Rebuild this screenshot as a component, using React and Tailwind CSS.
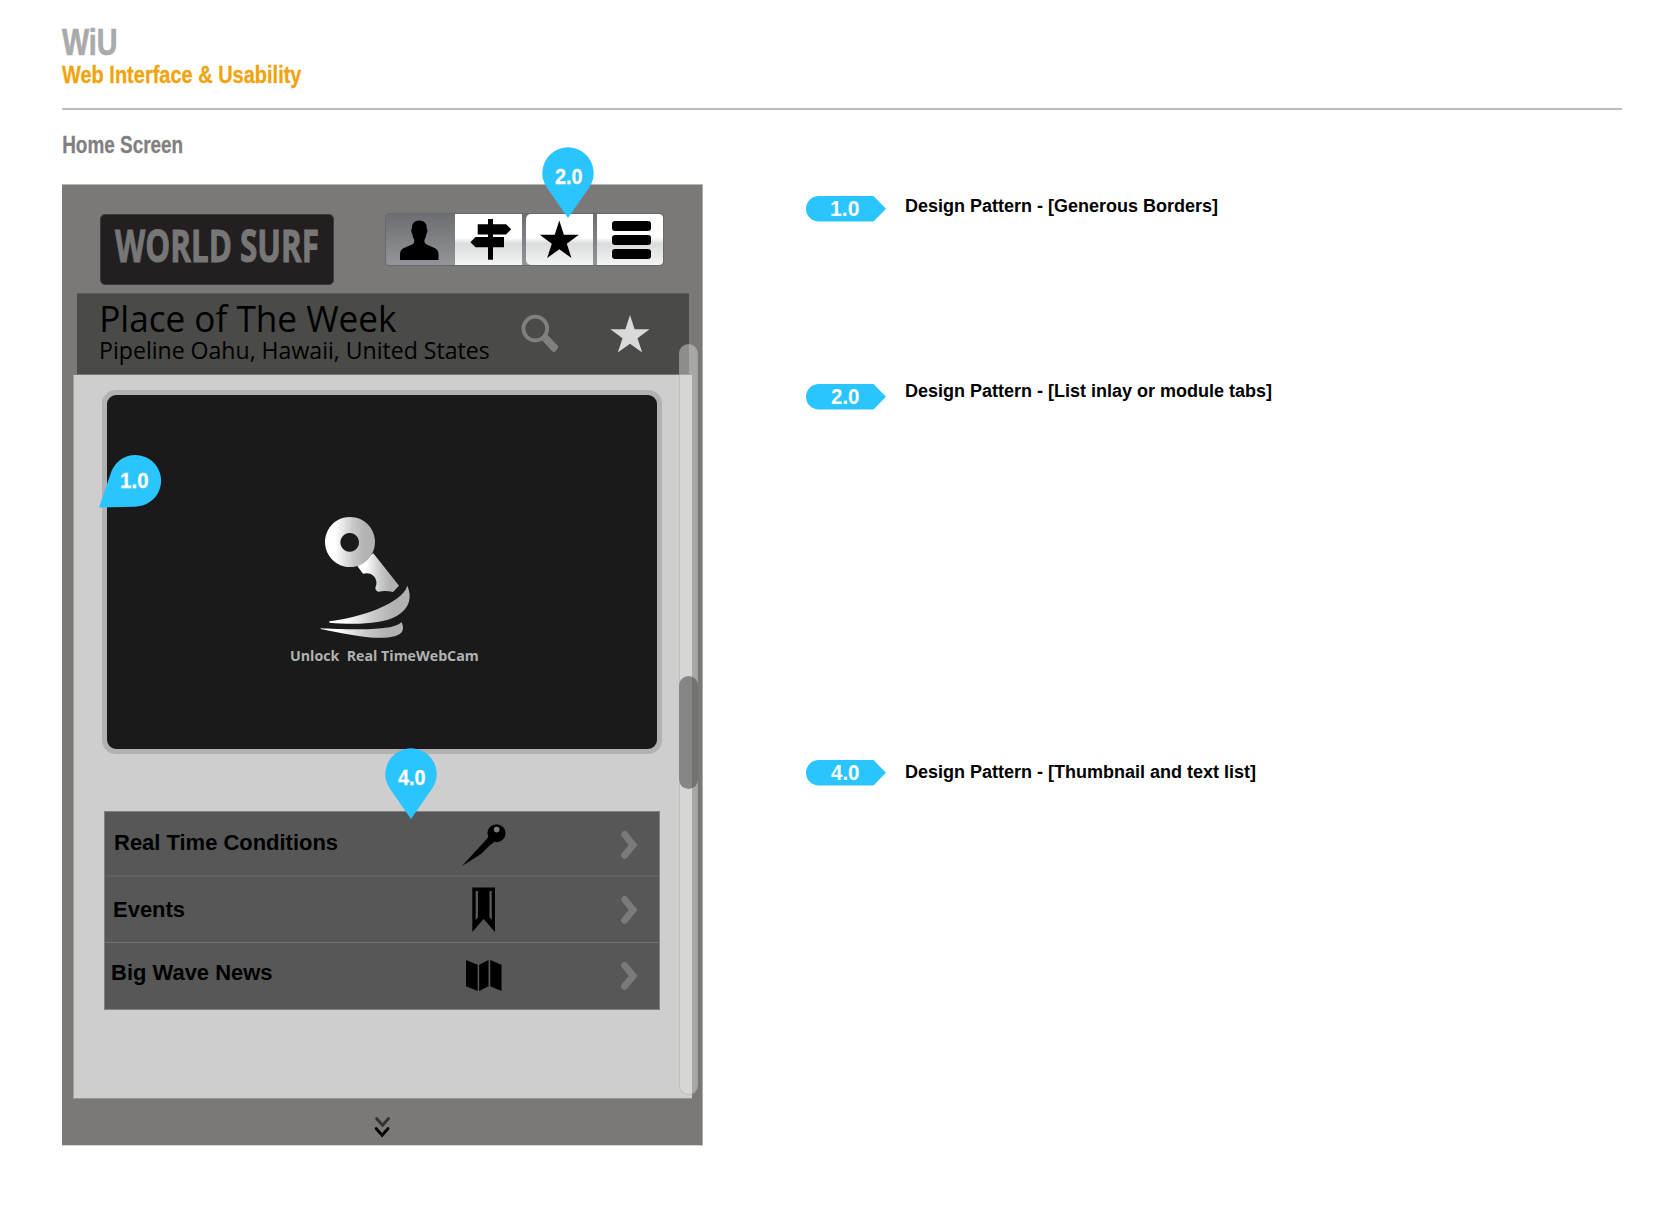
import { useLayoutEffect, useRef } from "react";

const SANS = "font-['Liberation_Sans',sans-serif]";
const HUMANIST = "font-['Open_Sans',sans-serif]";

// Condenses a line of text so that its ink spans exactly `width` pixels.
function Fit({ width, className = "", children }) {
  const ref = useRef(null);
  useLayoutEffect(() => {
    const el = ref.current;
    const cs = getComputedStyle(el);
    const ctx = document.createElement("canvas").getContext("2d");
    ctx.font = `${cs.fontWeight} ${cs.fontSize} ${cs.fontFamily}`;
    const m = ctx.measureText(children);
    const s = width / (m.actualBoundingBoxLeft + m.actualBoundingBoxRight);
    el.style.transform = `translateX(${m.actualBoundingBoxLeft * s}px) scaleX(${s})`;
  }, [width, children]);
  return (
    <div className={`${className} whitespace-pre`} style={{ width }}>
      <span ref={ref} className="block w-max origin-left">{children}</span>
    </div>
  );
}

const STAR = "M20 0 L24.6 14.3 L39.6 14.3 L27.5 23.2 L32.2 37.6 L20 28.8 L7.8 37.6 L12.5 23.2 L0.4 14.3 L15.4 14.3 Z";

function Pin({ label, className }) {
  return (
    <div className={`absolute h-[71px] w-[52px] ${className}`}>
      <svg className="absolute inset-0" width="52" height="71" viewBox="0 0 52 71">
        <path d="M26 71 L4.6 40.3 A25.7 25.7 0 1 1 47.4 40.3 Z" fill="#2ac4ff" />
      </svg>
      <Fit width={27} className={`${SANS} relative ml-[12.5px] pt-[15px] text-[22.6px] font-bold leading-[29px] text-white [-webkit-text-stroke:0.3px]`}>{label}</Fit>
    </div>
  );
}

function SidePin() {
  return (
    <div className="absolute left-[99px] top-[455px] h-[53px] w-[63px]">
      <svg className="absolute inset-0" width="63" height="53" viewBox="0 0 63 53">
        <path d="M0 52.6 L12.4 16.5 A25.7 25.7 0 1 1 41 51 Q38 51.7 35 51.7 Z" fill="#2ac4ff" />
      </svg>
      <Fit width={27} className={`${SANS} relative ml-[22px] pt-[12px] text-[22.6px] font-bold leading-7 text-white [-webkit-text-stroke:0.3px]`}>1.0</Fit>
    </div>
  );
}

function Tag({ label }) {
  return (
    <div className="relative h-[26px] w-20 shrink-0">
      <svg className="absolute inset-0" width="80" height="26" viewBox="0 0 80 26">
        <path d="M12.8 0 H67.5 L80 12.8 L67.5 25.6 H12.8 A12.8 12.8 0 0 1 12.8 0 Z" fill="#2ac4ff" />
      </svg>
      <Fit width={28.5} className={`${SANS} relative ml-[24.5px] text-[21.5px] font-bold leading-[26px] text-white`}>{label}</Fit>
    </div>
  );
}

function Note({ tag, text, width, className, lift }) {
  return (
    <div className={`flex items-start gap-[20px] ${className}`}>
      <Tag label={tag} />
      <Fit width={width} className={`${SANS} text-[18px] font-bold leading-5 text-black ${lift}`}>{text}</Fit>
    </div>
  );
}

function Chevron() {
  return (
    <svg className="absolute left-[512px] top-[18px]" width="22" height="30" viewBox="0 0 22 30">
      <path d="M7.6 4.3 L16.2 15 L7.6 25.3" fill="none" stroke="#7a7a7a" strokeWidth="6.8" strokeLinecap="round" strokeLinejoin="miter" />
    </svg>
  );
}

function ListRow({ label, width, className, textClass, icon }) {
  return (
    <div className={`relative ${className}`}>
      <Fit width={width} className={`${SANS} text-[22.6px] font-bold leading-7 text-black ${textClass}`}>{label}</Fit>
      {icon}
      <Chevron />
    </div>
  );
}

const lightTile = "bg-[linear-gradient(180deg,#fff_0%,#fff_46%,#dbdcdd_58%,#dfe0e0_66%,#f3f4f4_100%)]";

function NavBar() {
  return (
    <div className="mt-[28px] flex h-[53px] w-[279px] overflow-hidden rounded-[4px] border border-[#69696b] bg-gradient-to-b from-[#6d6e71] to-[#939598]">
      <div className="w-[69px]">
        <svg width="69" height="51" viewBox="0 0 69 51">
          <path d="M14 46 V40 Q14 35.5 18.5 33.7 L26.5 30.2 Q28.6 29 28.3 26 Q26.7 23.5 26.2 19.5 Q24.9 18.5 25.5 15 L26 14.5 Q25.6 6.8 33.3 6.6 Q41 6.8 40.7 14.5 L41.2 15 Q41.8 18.5 40.5 19.5 Q40 23.5 38.4 26 Q38.1 29 40.2 30.2 L48 33.7 Q52.5 35.5 52.5 40 V46 Z" />
        </svg>
      </div>
      <div className={`w-[67px] ${lightTile}`}>
        <svg width="67" height="51" viewBox="0 0 67 51">
          <path d="M33 5 H38 V45.7 H33 Z" />
          <path d="M22.7 10.2 H51 L56.2 15.3 L51 20.5 H22.7 Z" />
          <path d="M49 23 H20.5 L15.5 28.2 L20.5 33.3 H49 Z" />
        </svg>
      </div>
      <div className={`ml-[4px] w-[67px] rounded-l-[5px] ${lightTile}`}>
        <svg width="67" height="51" viewBox="0 0 67 51">
          <path d={STAR} transform="translate(13.3 6.5)" />
        </svg>
      </div>
      <div className={`ml-[4px] flex w-[66px] flex-col gap-[4px] rounded-r-[4px] pl-[15px] pt-[7px] ${lightTile}`}>
        <div className="h-[10px] w-[39px] rounded-[3px] bg-black" />
        <div className="h-[10px] w-[39px] rounded-[3px] bg-black" />
        <div className="h-[10px] w-[39px] rounded-[3px] bg-black" />
      </div>
    </div>
  );
}

function WebCam() {
  return (
    <div className="ml-[28px] mt-[15px] h-[364px] w-[560px] rounded-[14px] border-[5px] border-[#b2b2b2] bg-[#1a1a1a]">
      <svg className="ml-[173px] mt-[105px]" width="220" height="142" viewBox="0 0 660 426">
        <defs>
          <linearGradient id="metal" x1="0" y1="0" x2="1" y2="0">
            <stop offset="0.2" stopColor="#fff" />
            <stop offset="0.55" stopColor="#c8c9ca" />
            <stop offset="0.8" stopColor="#b2b2b2" />
          </linearGradient>
        </defs>
        <path d="M232 198 L280 160 L357 257 L339 276 Q315 270 296 275 Q286 272 286 263 Q294 244 283 230 Q270 216 249 221 Z" fill="url(#metal)" />
        <path fillRule="evenodd" d="M210 51 A75 75 0 1 1 209.9 51 Z M209 99 A28 28 0 1 0 209.1 99 Z" fill="url(#metal)" />
        <path d="M148 364 C240 352 365 312 382 257 C397 292 389 325 350 348 C305 374 220 374 148 368 Z" fill="url(#metal)" />
        <path d="M122 385 C190 388 345 395 364 366 C373 383 372 400 347 408 C290 424 200 402 122 387 Z" fill="url(#metal)" />
      </svg>
      <Fit width={187} className={`${HUMANIST} ml-[183.5px] mt-[3px] text-[15px] font-bold leading-5 text-[#b2b2b2]`}>Unlock  Real TimeWebCam</Fit>
    </div>
  );
}

const pinIcon = (
  <svg className="absolute left-[356px] top-[12px]" width="46" height="44" viewBox="0 0 46 44">
    <path d="M1 42 L23 18 Q26 15.5 27.5 12.5 L33 18.5 Q29.5 20 27 23 L20 30 Z" />
    <circle cx="35.5" cy="9.2" r="9" />
    <circle cx="35.7" cy="5.6" r="2.8" fill="#7a7a7a" />
  </svg>
);

const bookmarkIcon = (
  <svg className="absolute left-[367px] top-[10px]" width="24" height="46" viewBox="0 0 24 46">
    <path d="M.3 .5 H23 V45 L11.6 32 L.3 45 Z" />
    <path d="M3.6 4 H6 V30.5 L3.6 33 Z M17.4 4 H19.8 V33 L17.4 30.5 Z" fill="#575757" />
  </svg>
);

const mapIcon = (
  <svg className="absolute left-[361px] top-[17px]" width="36" height="32" viewBox="0 0 36 32">
    <path d="M0 0 L11.6 4.8 V31 L0 26.2 Z M13.2 4.8 L22.5 0 V26.2 L13.2 31 Z M24.3 0 L35.5 4.8 V31 L24.3 26.2 Z" />
  </svg>
);

function Phone() {
  return (
    <div className="flex h-[962px] w-[641px] flex-col border-b border-r border-t border-b-[#d6d6d5] border-r-[#adacab] border-t-[#b5b9b8] bg-[#7b7977]">
      <div className="flex h-[108px] items-start">
        <div className="ml-[38px] mt-[29px] h-[71px] w-[234px] rounded-[5px] border border-[#3d3a3a] bg-[#231f20]">
          <Fit width={203} className={`${HUMANIST} ml-[14px] mt-[2px] text-[44.5px] font-bold leading-[56px] text-[#777] [-webkit-text-stroke:1px]`}>WORLD SURF</Fit>
        </div>
        <div className="ml-[51px]"><NavBar /></div>
      </div>
      <div className="ml-[15px] flex h-[81px] w-[612px] border-t border-[#5c5c5a] bg-[#4a4a48]">
        <div className="w-[412px] pl-[24px]">
          <Fit width={295} className={`${HUMANIST} ml-[1px] pt-[4px] text-[37px] leading-[39px] text-black`}>Place of The Week</Fit>
          <Fit width={388} className={`${HUMANIST} text-[24.5px] leading-[25px] text-black`}>Pipeline Oahu, Hawaii, United States</Fit>
        </div>
        <svg className="ml-[31px] mt-[20px]" width="40" height="40" viewBox="0 0 40 40">
          <circle cx="15.3" cy="14.6" r="11.9" fill="none" stroke="#80807e" strokeWidth="3.8" />
          <path d="M23 24 L27 20.5 L38 32 Q38.5 35 34.5 38 Q32.5 38.5 31 36 L22 26 Z" fill="#80807e" />
        </svg>
        <svg className="ml-[50px] mt-[21px]" width="40" height="38" viewBox="0 0 40 38">
          <path d={STAR} fill="#d9d9d9" />
        </svg>
      </div>
      <div className="ml-[11px] h-[725px] w-[619px] border-b border-l border-t border-b-[#969695] border-l-[#a0a09f] border-t-[#777775] bg-[#cecece]">
        <WebCam />
        <div className="ml-[30px] mt-[57px] h-[199px] w-[556px] border border-[#808080] bg-[#575757]">
          <ListRow label="Real Time Conditions" width={222.5} className="h-[65px] border-b-2 border-[#606060]" textClass="ml-[10px] pt-[17px]" icon={pinIcon} />
          <ListRow label="Events" width={70.5} className="h-[66px] border-b border-[#727272]" textClass="ml-[9px] pt-[19px]" icon={bookmarkIcon} />
          <ListRow label="Big Wave News" width={160} className="h-[66px]" textClass="ml-[7px] pt-[16px]" icon={mapIcon} />
        </div>
      </div>
      <svg className="ml-[311px] mt-[17px]" width="20" height="24" viewBox="0 0 20 24">
        <path d="M3.6 2.5 L9.6 9.3 L15.6 2.5" fill="none" stroke="#333" strokeWidth="2.8" strokeLinecap="round" />
        <path d="M3.1 12.5 L9.1 19.3 L15.1 12.5" fill="none" stroke="#000" strokeWidth="2.8" strokeLinecap="round" />
      </svg>
    </div>
  );
}

export default function App() {
  return (
    <div className="relative h-[1222px] w-[1669px] overflow-hidden bg-white pl-[62px] pt-[23px]">
      <header>
        <Fit width={54} className={`${SANS} h-[38px] text-[37.5px] font-bold leading-[38px] text-[#aaa] [-webkit-text-stroke:0.7px]`}>WiU</Fit>
        <Fit width={240} className={`${SANS} h-7 text-[24px] font-bold leading-7 text-[#f0a30a] [-webkit-text-stroke:0.3px]`}>Web Interface &amp; Usability</Fit>
      </header>
      <div className="mt-[19px] h-[2px] w-[1560px] bg-[#bdbdbd]" />
      <Fit width={119} className={`${SANS} ml-[1px] mt-[21px] text-[23.7px] font-bold leading-[29px] text-[#808080] [-webkit-text-stroke:0.3px]`}>Home Screen</Fit>
      <main className="mt-[24px] flex">
        <Phone />
        <section className="ml-[103px] flex flex-col">
          <Note tag="1.0" text="Design Pattern - [Generous Borders]" width={311} className="mt-[12px] h-[26px]" lift="" />
          <Note tag="2.0" text="Design Pattern - [List inlay or module tabs]" width={365} className="mt-[162px] h-[26px]" lift="-mt-[3px]" />
          <Note tag="4.0" text="Design Pattern - [Thumbnail and text list]" width={349} className="mt-[350px] h-[26px]" lift="mt-[2px]" />
        </section>
      </main>
      <div className="absolute left-[679px] top-[344px] h-[751px] w-[19px] rounded-full border border-[#888]/30 bg-[#e0e2dd]/45" />
      <div className="absolute left-[679px] top-[676px] h-[113px] w-[19px] rounded-full bg-[linear-gradient(90deg,#868686_13px,#727270_13px)]" />
      <Pin label="2.0" className="left-[542px] top-[147px]" />
      <Pin label="4.0" className="left-[385px] top-[748px]" />
      <SidePin />
    </div>
  );
}
